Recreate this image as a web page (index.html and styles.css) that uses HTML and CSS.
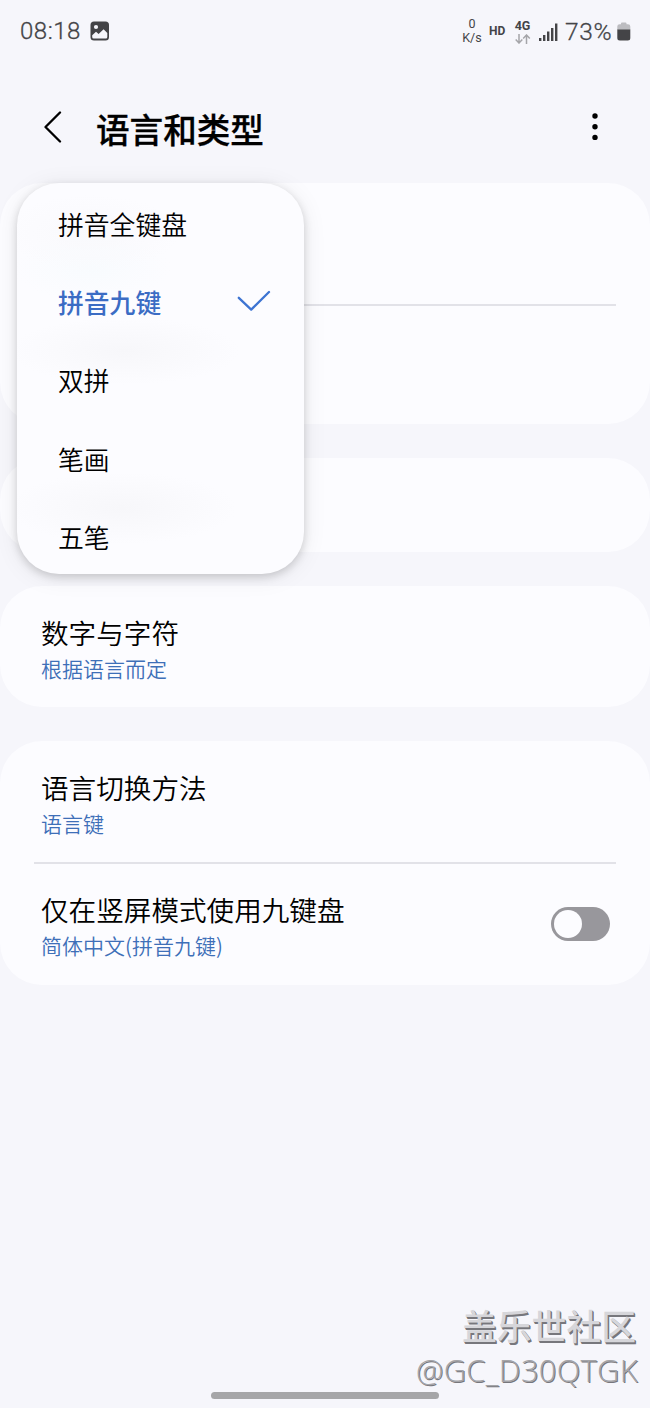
FILE: index.html
```
<!DOCTYPE html>
<html lang="zh-CN">
<head>
    <meta charset="utf-8">
    <title>语言和类型</title>
    <link rel="stylesheet" href="styles.css">
</head>
<body>
    <div class="status-bar">
        <span class="time">08:18</span>
        <svg class="picture-icon" width="20" height="20" viewBox="0 0 20 20">
            <rect x="0.5" y="0.5" width="18.5" height="19" rx="3.5" fill="#444447"/>
            <circle cx="6" cy="6" r="2.1" fill="#f6f6fb"/>
            <path d="M2.2 14.2 L6 10.8 L8.6 13 L13.6 8.2 L17.3 12 V16 Q17.3 17.5 15.8 17.5 H3.7 Q2.2 17.5 2.2 16 Z" fill="#f6f6fb"/>
        </svg>
        <div class="status-right">
            <div class="speed"><span>0</span><span>K/s</span></div>
            <span class="hd">HD</span>
            <div class="network">
                <span>4G</span>
                <svg width="16" height="10" viewBox="0 0 16 10" fill="none" stroke="#a5a5a9" stroke-width="1.5">
                    <path d="M4 0 V9 M0.7 5.5 L4 9 L7.3 5.5"/>
                    <path d="M11.5 10 V1 M8.2 4.5 L11.5 1 L14.8 4.5"/>
                </svg>
            </div>
            <svg class="signal" width="19" height="18" viewBox="0 0 19 18" fill="#444447">
                <rect x="0" y="15" width="2.4" height="3"/>
                <rect x="4" y="12" width="2.4" height="6"/>
                <rect x="8" y="8.5" width="2.4" height="9.5"/>
                <rect x="12" y="5" width="2.4" height="13"/>
                <rect x="16" y="0.5" width="2.4" height="17.5"/>
            </svg>
            <span class="percent">73%</span>
            <svg class="battery" width="14" height="19" viewBox="0 0 14 19">
                <path d="M4 2.2 V1.5 Q4 0.5 5 0.5 H8.5 Q9.5 0.5 9.5 1.5 V2.2 H11 Q13.3 2.2 13.3 4.5 V8 H0.3 V4.5 Q0.3 2.2 2.6 2.2 Z" fill="#bcbcc0"/>
                <path d="M0.3 7.4 H13.3 V16 Q13.3 18.5 10.8 18.5 H2.8 Q0.3 18.5 0.3 16 Z" fill="#444447"/>
            </svg>
        </div>
    </div>

    <div class="header">
        <svg class="back" width="18" height="32" viewBox="0 0 18 32">
            <path d="M16 1.5 L1.5 16 L16 30.5" fill="none" stroke="#000" stroke-width="2.3" stroke-linecap="round" stroke-linejoin="round"/>
        </svg>
        <h1>语言和类型</h1>
        <svg class="more" width="6" height="28" viewBox="0 0 6 28">
            <circle cx="3" cy="3" r="2.7"/>
            <circle cx="3" cy="13.7" r="2.7"/>
            <circle cx="3" cy="24.4" r="2.7"/>
        </svg>
    </div>

    <div class="main">
        <div class="card languages">
            <div class="divider"></div>
        </div>
        <div class="card manage"></div>
        <div class="card">
            <div class="row">
                <div class="label">
                    <span class="name">数字与字符</span>
                    <span class="value">根据语言而定</span>
                </div>
            </div>
        </div>
        <div class="card">
            <div class="row">
                <div class="label">
                    <span class="name">语言切换方法</span>
                    <span class="value">语言键</span>
                </div>
            </div>
            <div class="divider"></div>
            <div class="row last">
                <div class="label">
                    <span class="name">仅在竖屏模式使用九键盘</span>
                    <span class="value">简体中文(拼音九键)</span>
                </div>
                <div class="switch"></div>
            </div>
        </div>

        <div class="menu">
            <div class="menu-item">拼音全键盘</div>
            <div class="menu-item selected">
                <span>拼音九键</span>
                <svg width="34" height="22" viewBox="0 0 34 22">
                    <path d="M1.8 7.8 L14.2 19.6 L32 2" fill="none" stroke="#3d74d2" stroke-width="2.3" stroke-linecap="round" stroke-linejoin="round"/>
                </svg>
            </div>
            <div class="menu-item">双拼</div>
            <div class="menu-item">笔画</div>
            <div class="menu-item">五笔</div>
        </div>
    </div>

    <div class="watermark">
        <span class="community">盖乐世社区</span>
        <span class="user">@GC_D30QTGK</span>
    </div>
    <div class="home-bar"></div>
</body>
</html>
```
FILE: styles.css
```
:root {
    --bg: #f6f6fb;
    --card: #fcfcff;
    --blue: #3e6fb8;
    --status: #444447;
}

body {
    position: relative;
    width: 650px;
    height: 1408px;
    margin: 0;
    overflow: hidden;
    display: flex;
    flex-direction: column;
    background: var(--bg);
    color: #000;
    font-family: "Noto Sans CJK SC", sans-serif;
    font-weight: 350;
}

svg {
    display: block;
    flex: none;
}

/* Status bar */
.status-bar {
    display: flex;
    align-items: center;
    height: 62px;
    padding: 0 19px 0 20px;
    box-sizing: border-box;
    color: var(--status);
    font-family: Roboto, sans-serif;
}

.time {
    width: 70px;
    font-size: 24px;
    font-weight: 300;
    -webkit-text-stroke: 0.3px var(--status);
    letter-spacing: 0.5px;
}

.status-right {
    display: flex;
    align-items: center;
    margin-left: auto;
}

.speed {
    display: flex;
    flex-direction: column;
    align-items: center;
    width: 20px;
    font-size: 12.5px;
    font-weight: 400;
    line-height: 14px;
}

.hd {
    margin-left: 7px;
    width: 25px;
    font-size: 12px;
    font-weight: 700;
}

.network {
    display: flex;
    flex-direction: column;
    align-items: center;
    width: 17px;
    font-size: 12.5px;
    font-weight: 700;
    line-height: 14px;
}

.network svg {
    margin-top: 1px;
}

.signal {
    margin: 2px 7px 0 8px;
}

.percent {
    width: 52px;
    font-size: 24.5px;
    font-weight: 300;
    letter-spacing: 0.7px;
    -webkit-text-stroke: 0.3px var(--status);
}

/* Title bar */
.header {
    display: flex;
    align-items: center;
    height: 121px;
    padding: 0 52px 0 44px;
    box-sizing: border-box;
}

.back {
    margin-top: 9px;
}

.header h1 {
    flex: 1;
    margin: 13px 0 0 34px;
    font-size: 33.6px;
    font-weight: 500;
    line-height: 48px;
    -webkit-text-stroke: 0.3px #000;
}

.more {
    margin-top: 9px;
}

/* Settings cards */
.main {
    position: relative;
    display: flex;
    flex-direction: column;
    gap: 34px;
}

.card {
    border-radius: 42px;
    background: var(--card);
}

.languages {
    height: 241px;
    padding-top: 121px;
    box-sizing: border-box;
}

.manage {
    height: 94px;
}

.divider {
    height: 2px;
    margin: 0 34px;
    background: #e2e2e8;
}

.row {
    display: flex;
    align-items: center;
    justify-content: space-between;
    height: 121px;
    padding: 0 40px 0 41px;
    box-sizing: border-box;
}

.last {
    padding-bottom: 2px;
}

.label {
    display: flex;
    flex-direction: column;
    padding-top: 3px;
}

.name {
    font-size: 27.6px;
    line-height: 40px;
}

.value {
    color: var(--blue);
    font-size: 21px;
    line-height: 32px;
}

.switch {
    width: 59px;
    height: 34px;
    padding: 3px;
    box-sizing: border-box;
    border-radius: 17px;
    background: #98979c;
}

.switch::before {
    content: "";
    display: block;
    width: 28px;
    height: 28px;
    border-radius: 50%;
    background: #fcfcff;
}

/* Popup menu */
.menu {
    position: absolute;
    left: 17px;
    top: 0;
    width: 287px;
    height: 391px;
    padding: 1.5px 0 0;
    box-sizing: border-box;
    border-radius: 42px;
    /* faint traces of the rows underneath */
    background:
        radial-gradient(ellipse 90px 38px at 75px 50px, #f9f9fc, transparent),
        radial-gradient(ellipse 80px 34px at 75px 85px, #f8fbfe, transparent),
        radial-gradient(ellipse 115px 34px at 108px 168px, #f7f7fa, transparent),
        radial-gradient(ellipse 115px 36px at 105px 325px, #f7f7fa, transparent),
        #fcfcff;
    box-shadow: 0 3px 8px rgba(0, 0, 0, 0.16), 0 3px 24px rgba(0, 0, 0, 0.08);
}

.menu-item {
    display: flex;
    align-items: center;
    justify-content: space-between;
    height: 78.2px;
    padding: 0 33.5px 0 41px;
    box-sizing: border-box;
    font-size: 25.8px;
}

.selected {
    color: #3b6cc4;
    font-weight: 500;
}

.selected svg {
    margin-top: -2px;
}

/* Photo watermark */
.watermark {
    display: flex;
    flex-direction: column;
    align-items: flex-end;
    margin: auto 12px 16px 0;
}

.community {
    margin-right: 2px;
    color: #d6d6da;
    font-size: 34.8px;
    font-weight: 500;
    line-height: 46px;
    text-shadow: 1px 1px 0 #77777c, 1.5px 1.5px 0 #77777c;
}

.user {
    color: #a4a4a8;
    font-family: "Open Sans", "Noto Sans", sans-serif;
    font-size: 30.8px;
    font-weight: 300;
    letter-spacing: 0.35px;
    line-height: 44px;
    text-shadow: 1px 1px 0 #77777c;
}

.home-bar {
    position: absolute;
    left: 211px;
    bottom: 9px;
    width: 228px;
    height: 7px;
    border-radius: 4px;
    background: #a6a6a8;
}
```
